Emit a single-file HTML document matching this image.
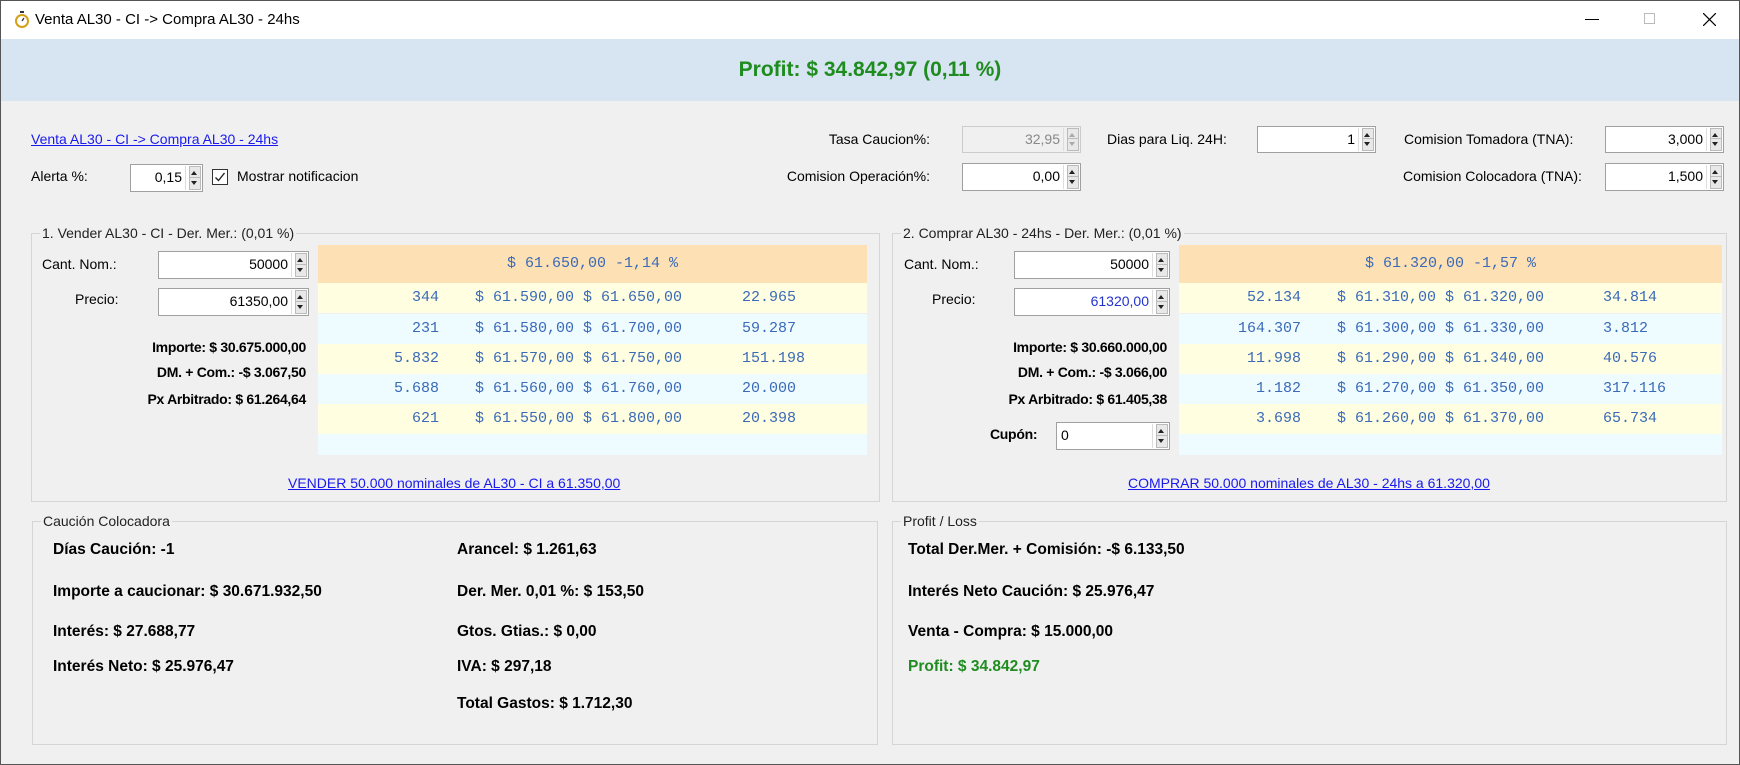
<!DOCTYPE html>
<html><head><meta charset="utf-8"><style>
*{margin:0;padding:0;box-sizing:border-box}
body{width:1740px;height:765px;background:#f0f0f0;font-family:"Liberation Sans",sans-serif;font-size:14px;color:#000;position:relative;overflow:hidden}
.a{position:absolute;white-space:nowrap}
.win{position:absolute;left:0;top:0;width:1740px;height:765px;border:1px solid #555;pointer-events:none}
.tb{position:absolute;left:0;top:0;width:1740px;height:39px;background:#fff}
.band{position:absolute;left:0;top:39px;width:1740px;height:62px;background:#d7e4f1}
.lnk{color:#1a1aee;text-decoration:underline}
.sp{position:absolute;background:#fff;border:1px solid #a0a0a0;text-align:right;padding-right:20px;line-height:25px;font-size:14px}
.sp.dis{background:#f0f0f0;color:#888;border-color:#ccc}
.sp .b{position:absolute;right:1px;top:1px;width:16px;bottom:1px;border-left:1px solid #ddd}
.sp .b:before,.sp .b:after{content:"";position:absolute;left:3px;width:10px;height:11px;background:#e8e8e8;border:1px solid #bbb}
.sp .b:before{top:0}.sp .b:after{bottom:0}
.sp .t{position:absolute;right:5px;width:0;height:0;border-left:3px solid transparent;border-right:3px solid transparent;z-index:2}
.sp .u{top:6px;border-bottom:4px solid #222}.sp .d{bottom:6px;border-top:4px solid #222}
.dis .u{border-bottom-color:#aaa}.dis .d{border-top-color:#aaa}
.grp{position:absolute;border:1px solid #d5d5d5}
.gt{position:absolute;background:#f0f0f0;padding:0 2px;font-size:14px;color:#222;line-height:16px}
.bk{position:absolute;font-family:"Liberation Mono",monospace;font-size:15px;color:#3a6ab8}
.bk .h{position:absolute;left:0;right:0;top:0;height:38px;background:#fde0b3;text-align:center;line-height:38px}
.bk .r{position:absolute;left:0;right:0;height:30px;line-height:30px}
.y{background:#fffee0}.c{background:#effcff}
.r span{position:absolute}
.bl{font-weight:bold;font-size:14px;letter-spacing:-0.3px}
.bb{font-weight:bold;font-size:15.5px}
</style></head><body>
<div class="tb"></div>
<svg class="a" style="left:14px;top:11px" width="16" height="18" viewBox="0 0 16 18"><rect x="6" y="0" width="4" height="2" fill="#333"/><circle cx="8" cy="10" r="6" fill="#fff" stroke="#d4a017" stroke-width="2"/><line x1="8" y1="10" x2="10" y2="7" stroke="#333" stroke-width="1.3"/></svg>
<div class="a" style="left:35px;top:11px;font-size:15px">Venta AL30 - CI -&gt; Compra AL30 - 24hs</div>
<div class="a" style="left:1585px;top:19px;width:14px;height:1px;background:#000"></div>
<div class="a" style="left:1644px;top:13px;width:11px;height:11px;border:1px solid #bbb"></div>
<svg class="a" style="left:1703px;top:13px" width="13" height="13"><path d="M0 0L13 13M13 0L0 13" stroke="#000" stroke-width="1.2"/></svg>
<div class="band"></div>
<div class="a" style="left:0;width:1740px;top:58px;text-align:center;font-size:21px;font-weight:bold;color:#1f8c1f">Profit: $ 34.842,97 (0,11 %)</div>

<div class="a lnk" style="left:31px;top:131px">Venta AL30 - CI -&gt; Compra AL30 - 24hs</div>
<div class="a" style="left:31px;top:168px">Alerta %:</div>
<div class="sp" style="left:130px;top:164px;width:73px;height:28px">0,15<i class="b"></i><i class="t u"></i><i class="t d"></i></div>
<div class="a" style="left:212px;top:169px;width:16px;height:16px;border:1px solid #333;background:#fff"><svg width="14" height="14" style="position:absolute;left:0;top:0"><path d="M2.5 7.5L5.5 10.5L11.5 3" stroke="#222" stroke-width="1.4" fill="none"/></svg></div>
<div class="a" style="left:237px;top:168px">Mostrar notificacion</div>

<div class="a" style="right:810px;top:131px">Tasa Caucion%:</div>
<div class="sp dis" style="left:962px;top:126px;width:119px;height:27px">32,95<i class="b"></i><i class="t u"></i><i class="t d"></i></div>
<div class="a" style="right:810px;top:168px">Comision Operación%:</div>
<div class="sp" style="left:962px;top:163px;width:119px;height:28px">0,00<i class="b"></i><i class="t u"></i><i class="t d"></i></div>
<div class="a" style="left:1107px;top:131px">Dias para Liq. 24H:</div>
<div class="sp" style="left:1257px;top:126px;width:119px;height:27px">1<i class="b"></i><i class="t u"></i><i class="t d"></i></div>
<div class="a" style="left:1404px;top:131px">Comision Tomadora (TNA):</div>
<div class="sp" style="left:1605px;top:126px;width:119px;height:27px">3,000<i class="b"></i><i class="t u"></i><i class="t d"></i></div>
<div class="a" style="left:1403px;top:168px">Comision Colocadora (TNA):</div>
<div class="sp" style="left:1605px;top:163px;width:119px;height:28px">1,500<i class="b"></i><i class="t u"></i><i class="t d"></i></div>

<!-- group 1 -->
<div class="grp" style="left:31px;top:233px;width:849px;height:269px"></div>
<div class="gt" style="left:40px;top:225px">1. Vender AL30 - CI - Der. Mer.: (0,01 %)</div>
<div class="a" style="left:42px;top:256px">Cant. Nom.:</div>
<div class="sp" style="left:158px;top:251px;width:151px;height:28px">50000<i class="b"></i><i class="t u"></i><i class="t d"></i></div>
<div class="a" style="left:75px;top:291px">Precio:</div>
<div class="sp" style="left:158px;top:288px;width:151px;height:28px">61350,00<i class="b"></i><i class="t u"></i><i class="t d"></i></div>
<div class="a bl" style="right:1434px;top:339px">Importe: $ 30.675.000,00</div>
<div class="a bl" style="right:1434px;top:364px">DM. + Com.: -$ 3.067,50</div>
<div class="a bl" style="right:1434px;top:391px">Px Arbitrado: $ 61.264,64</div>
<div class="bk" style="left:318px;top:245px;width:549px;height:210px">
<div class="h">$ 61.650,00 -1,14 %</div>
<div class="r y" style="top:38px"><span style="right:428px">344</span><span style="left:157px">$ 61.590,00 $ 61.650,00</span><span style="left:424px">22.965</span></div>
<div class="r c" style="top:69px"><span style="right:428px">231</span><span style="left:157px">$ 61.580,00 $ 61.700,00</span><span style="left:424px">59.287</span></div>
<div class="r y" style="top:99px"><span style="right:428px">5.832</span><span style="left:157px">$ 61.570,00 $ 61.750,00</span><span style="left:424px">151.198</span></div>
<div class="r c" style="top:129px"><span style="right:428px">5.688</span><span style="left:157px">$ 61.560,00 $ 61.760,00</span><span style="left:424px">20.000</span></div>
<div class="r y" style="top:159px"><span style="right:428px">621</span><span style="left:157px">$ 61.550,00 $ 61.800,00</span><span style="left:424px">20.398</span></div>
<div class="r c" style="top:189px;height:21px"></div>
</div>
<div class="a lnk" style="left:288px;top:475px">VENDER 50.000 nominales de AL30 - CI a 61.350,00</div>

<!-- group 2 -->
<div class="grp" style="left:892px;top:233px;width:835px;height:269px"></div>
<div class="gt" style="left:901px;top:225px">2. Comprar AL30 - 24hs - Der. Mer.: (0,01 %)</div>
<div class="a" style="left:904px;top:256px">Cant. Nom.:</div>
<div class="sp" style="left:1014px;top:251px;width:156px;height:28px">50000<i class="b"></i><i class="t u"></i><i class="t d"></i></div>
<div class="a" style="left:932px;top:291px">Precio:</div>
<div class="sp" style="left:1014px;top:288px;width:156px;height:28px;color:#2233cc">61320,00<i class="b"></i><i class="t u"></i><i class="t d"></i></div>
<div class="a bl" style="right:573px;top:339px">Importe: $ 30.660.000,00</div>
<div class="a bl" style="right:573px;top:364px">DM. + Com.: -$ 3.066,00</div>
<div class="a bl" style="right:573px;top:391px">Px Arbitrado: $ 61.405,38</div>
<div class="a bl" style="left:990px;top:426px">Cupón:</div>
<div class="sp" style="left:1056px;top:422px;width:114px;height:28px;text-align:left;padding-left:4px">0<i class="b"></i><i class="t u"></i><i class="t d"></i></div>
<div class="bk" style="left:1179px;top:245px;width:543px;height:210px">
<div class="h">$ 61.320,00 -1,57 %</div>
<div class="r y" style="top:38px"><span style="right:421px">52.134</span><span style="left:158px">$ 61.310,00 $ 61.320,00</span><span style="left:424px">34.814</span></div>
<div class="r c" style="top:69px"><span style="right:421px">164.307</span><span style="left:158px">$ 61.300,00 $ 61.330,00</span><span style="left:424px">3.812</span></div>
<div class="r y" style="top:99px"><span style="right:421px">11.998</span><span style="left:158px">$ 61.290,00 $ 61.340,00</span><span style="left:424px">40.576</span></div>
<div class="r c" style="top:129px"><span style="right:421px">1.182</span><span style="left:158px">$ 61.270,00 $ 61.350,00</span><span style="left:424px">317.116</span></div>
<div class="r y" style="top:159px"><span style="right:421px">3.698</span><span style="left:158px">$ 61.260,00 $ 61.370,00</span><span style="left:424px">65.734</span></div>
<div class="r c" style="top:189px;height:21px"></div>
</div>
<div class="a lnk" style="left:1128px;top:475px">COMPRAR 50.000 nominales de AL30 - 24hs a 61.320,00</div>

<!-- bottom groups -->
<div class="grp" style="left:32px;top:521px;width:846px;height:224px"></div>
<div class="gt" style="left:41px;top:513px">Caución Colocadora</div>
<div class="a bb" style="left:53px;top:541px">Días Caución: -1</div>
<div class="a bb" style="left:53px;top:583px">Importe a caucionar: $ 30.671.932,50</div>
<div class="a bb" style="left:53px;top:623px">Interés: $ 27.688,77</div>
<div class="a bb" style="left:53px;top:658px">Interés Neto: $ 25.976,47</div>
<div class="a bb" style="left:457px;top:541px">Arancel: $ 1.261,63</div>
<div class="a bb" style="left:457px;top:583px">Der. Mer. 0,01 %: $ 153,50</div>
<div class="a bb" style="left:457px;top:623px">Gtos. Gtias.: $ 0,00</div>
<div class="a bb" style="left:457px;top:658px">IVA: $ 297,18</div>
<div class="a bb" style="left:457px;top:695px">Total Gastos: $ 1.712,30</div>

<div class="grp" style="left:892px;top:521px;width:835px;height:224px"></div>
<div class="gt" style="left:901px;top:513px">Profit / Loss</div>
<div class="a bb" style="left:908px;top:541px">Total Der.Mer. + Comisión: -$ 6.133,50</div>
<div class="a bb" style="left:908px;top:583px">Interés Neto Caución: $ 25.976,47</div>
<div class="a bb" style="left:908px;top:623px">Venta - Compra: $ 15.000,00</div>
<div class="a bb" style="left:908px;top:658px;color:#1f8c1f">Profit: $ 34.842,97</div>
<div class="win"></div>
</body></html>
